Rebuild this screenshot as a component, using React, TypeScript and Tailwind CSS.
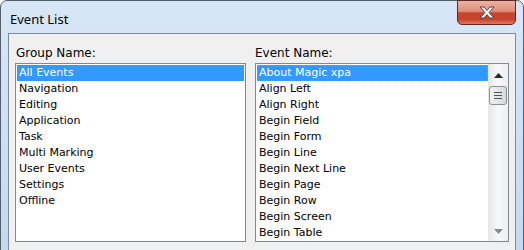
const groups = [
  "All Events",
  "Navigation",
  "Editing",
  "Application",
  "Task",
  "Multi Marking",
  "User Events",
  "Settings",
  "Offline",
];

const events = [
  "About Magic xpa",
  "Align Left",
  "Align Right",
  "Begin Field",
  "Begin Form",
  "Begin Line",
  "Begin Next Line",
  "Begin Page",
  "Begin Row",
  "Begin Screen",
  "Begin Table",
];

const CloseGlyph = () => (
  <svg width="16" height="13" viewBox="0 0 16 13">
    <polygon
      points="1,1 5,1 8,4.5 11,1 15,1 10,6.5 15,12 11,12 8,8.5 5,12 1,12 6,6.5"
      fill="#ffffff"
      stroke="#454545"
      strokeWidth="1"
      strokeLinejoin="round"
    />
  </svg>
);

const ScrollBar = () => (
  <div className="flex w-[20px] flex-col bg-linear-to-r from-[#e6e6e6] via-[#f8f8f8] to-[#eeeeee]">
    {/* up arrow */}
    <div className="flex h-[22px] items-center justify-center">
      <svg width="9" height="5" viewBox="0 0 9 5">
        <polygon points="4.5,0 9,5 0,5" fill="#2b2b2b" />
      </svg>
    </div>
    {/* thumb */}
    <div className="mx-[1px] flex h-[19px] flex-col items-center justify-center gap-[2px] rounded-[3px] border border-[#8e8f8f] bg-linear-to-r from-[#f3f3f3] to-[#d8d8d8]">
      <div className="h-px w-[8px] bg-[#555]" />
      <div className="h-px w-[8px] bg-[#555]" />
      <div className="h-px w-[8px] bg-[#555]" />
    </div>
    <div className="flex-1" />
    {/* down arrow */}
    <div className="flex h-[20px] items-start justify-center pt-[8px]">
      <svg width="9" height="5" viewBox="0 0 9 5">
        <polygon points="0,0 9,0 4.5,5" fill="#8a8a8a" />
      </svg>
    </div>
  </div>
);

const App = () => {
  return (
    <div className="h-[250px] w-[524px] overflow-hidden bg-white">
      <div className="flex h-[270px] flex-col rounded-t-[7px] border border-[#555f6b] bg-linear-to-b from-[#d8e7f7] to-[#c3d8ef]">
        {/* Title bar */}
        <div className="flex h-[32px] items-start justify-between">
          <span className="pl-[9px] pt-[10px] font-['Noto_Sans',sans-serif] text-[13px] leading-[16px] text-black">
            Event List
          </span>
          <div className="-mt-px mr-[7px] flex h-[25px] w-[59px] items-center justify-center rounded-b-[5px] border border-[#5b2a21] bg-[linear-gradient(to_bottom,#ecb2a5_0%,#e08c7a_45%,#c9432d_52%,#c8432e_80%,#e2785f_100%)]">
            <CloseGlyph />
          </div>
        </div>

        {/* Dialog body */}
        <div className="mx-[7px] flex-1 border border-[#7f8b99] bg-[#f0f0f0] px-[6px] pt-[11px]">
          <div className="grid grid-cols-[231px_254px] gap-x-[9px] font-['DejaVu_Sans',sans-serif] text-black">
            <div className="flex flex-col gap-[2px]">
              <span className="pl-px text-[12px] leading-[16px]">Group Name:</span>
              <div className="h-[179px] overflow-hidden border border-[#828790] bg-white p-px">
                {groups.map((g, i) => (
                  <div
                    key={g}
                    className={
                      i === 0
                        ? "h-[16px] bg-[#3399ff] pl-[2px] text-[11px] leading-[16px] text-white"
                        : "h-[16px] pl-[2px] text-[11px] leading-[16px]"
                    }
                  >
                    {g}
                  </div>
                ))}
              </div>
            </div>

            <div className="flex flex-col gap-[2px]">
              <span className="text-[12px] leading-[16px]">Event Name:</span>
              <div className="flex h-[179px] overflow-hidden border border-[#828790] bg-white">
                <div className="flex-1 py-px pl-px">
                  {events.map((e, i) => (
                    <div
                      key={e}
                      className={
                        i === 0
                          ? "h-[16px] border border-dotted border-[#e0862a] bg-[#3399ff] pl-px text-[11px] leading-[14px] text-white"
                          : "h-[16px] pl-[2px] text-[11px] leading-[16px]"
                      }
                    >
                      {e}
                    </div>
                  ))}
                </div>
                <ScrollBar />
              </div>
            </div>
          </div>
        </div>
      </div>
    </div>
  );
};

export default App;
